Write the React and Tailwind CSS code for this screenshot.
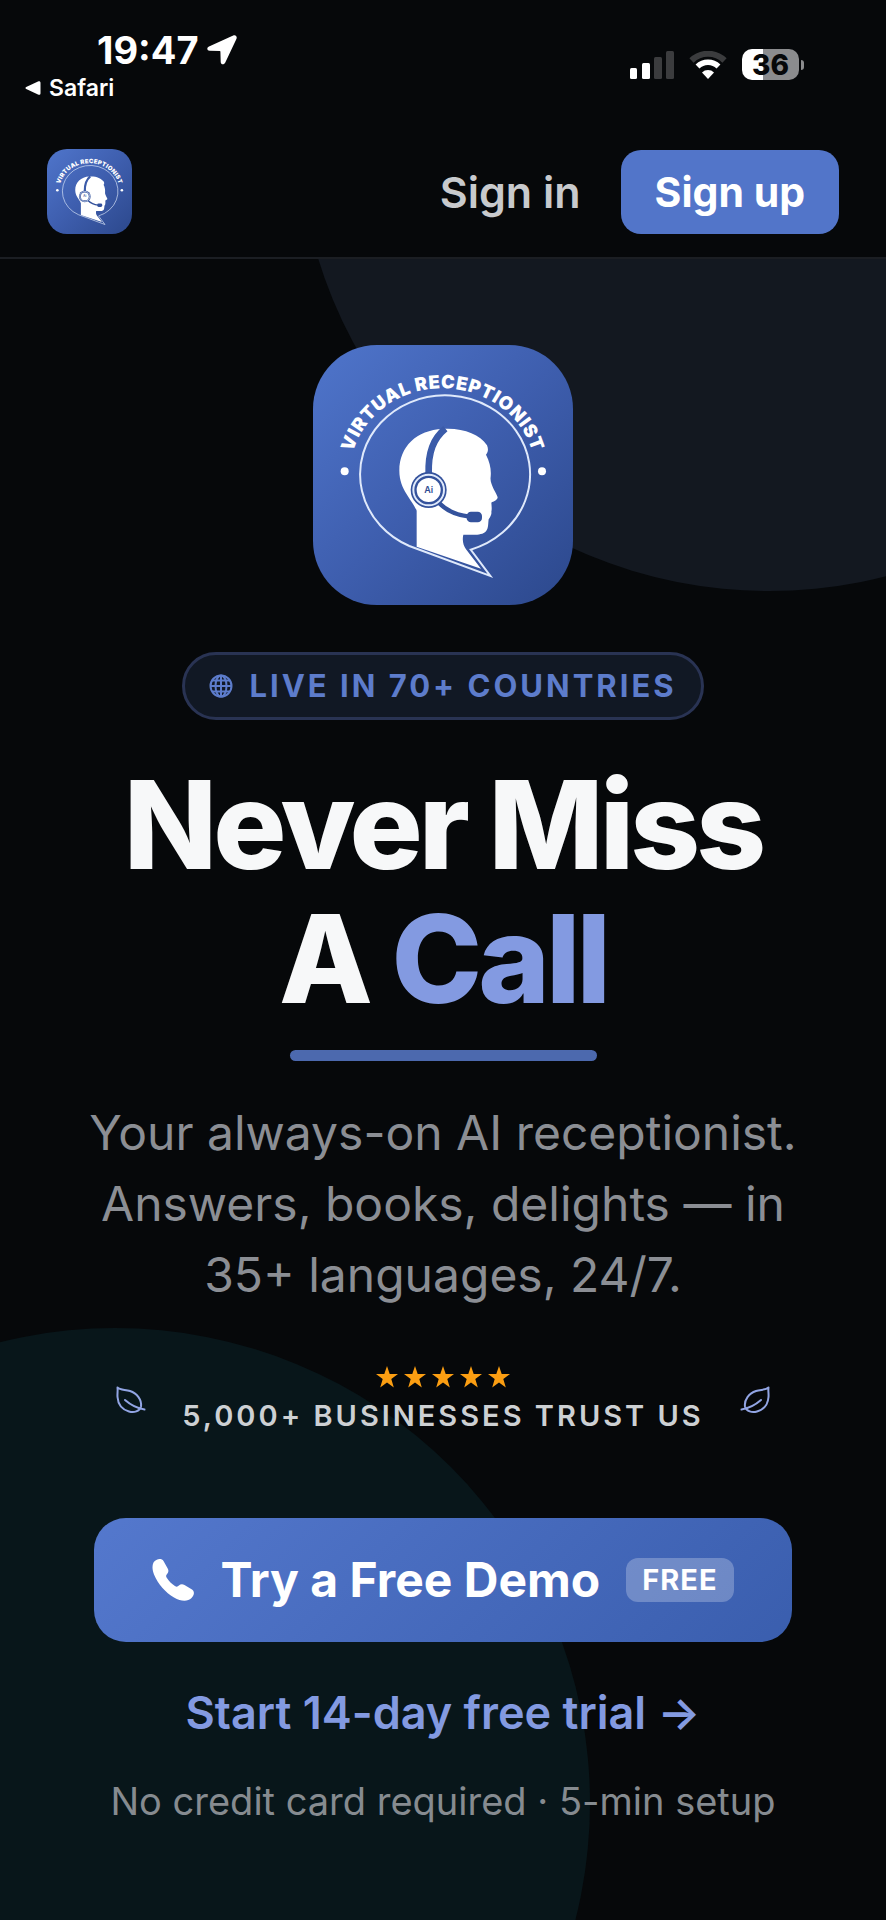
import { useId } from 'react'

const STARS = [1, 2, 3, 4, 5]

export default function App() {
  return (
    <div className="relative flex min-h-screen flex-col overflow-hidden bg-[#06080a] font-['Inter',sans-serif] text-white">
      <div className="relative z-10 bg-[#06080a]">
        <StatusBar />
        <Header />
      </div>
      <Hero />
    </div>
  )
}

function StatusBar() {
  return (
    <div className="flex h-[126px] items-start justify-between pt-8 pr-[82px] pl-[25px]">
      <div>
        <div className="flex items-center gap-2 pl-[72px]">
          <span className="text-[38px] leading-9 font-bold">19:47</span>
          <svg viewBox="0 0 30 30" className="size-[30px]" fill="currentColor" aria-hidden="true">
            <path d="M26.200.6 2 11.400c-2.600 1.200-2 4.200.6 4.300l10.200.3c.4 0 .6.2.6.6l.3 10.400c.1 2.800 3.400 3.200 4.600.6L29.400 4C30.500 1.600 28.600-.5 26.200.6Z" />
          </svg>
        </div>
        <a href="#safari" className="mt-1.5 flex items-center gap-2">
          <svg viewBox="0 0 16 14" className="h-3.5 w-4" fill="currentColor" aria-hidden="true">
            <path d="M1.200 6 13 .4C14.500-.2 15.500.4 15.500 1.800v10.400c0 1.400-1 2-2.500 1.400L1.200 8C.2 7.500.2 6.500 1.200 6Z" />
          </svg>
          <span className="text-[23px] leading-7 font-semibold">Safari</span>
        </a>
      </div>

      <div className="flex items-center gap-[15px] pt-[17px]">
        <svg viewBox="0 0 44 28" className="h-7 w-11" aria-hidden="true">
          <rect x="0" y="17" width="7" height="11" rx="1.500" fill="#fff" />
          <rect x="12" y="12" width="8" height="16" rx="1.500" fill="#fff" />
          <rect x="24" y="6" width="8" height="22" rx="1.500" fill="#3b3c3e" />
          <rect x="36" y="0" width="8" height="28" rx="1.500" fill="#3b3c3e" />
        </svg>
        <svg viewBox="0 0 38 28" className="h-7 w-[38px]" fill="none" aria-hidden="true">
          <path d="M2.500 9.500a23.500 23.500 0 0 1 33 0" stroke="#3b3c3e" strokeWidth="6" />
          <path d="M8.500 15.500a15 15 0 0 1 21 0" stroke="#fff" strokeWidth="5.500" />
          <path d="M19 28l-6-6.500a8.500 8.500 0 0 1 12 0Z" fill="#fff" />
        </svg>
        <div className="flex items-center gap-0.5">
          <div className="flex h-[31px] w-[57px] items-center justify-center rounded-[10px] bg-linear-to-r from-white from-36% to-[#8b8c8e] to-36%">
            <span className="text-[28px] leading-7 font-extrabold text-[#06080a]">36</span>
          </div>
          <div className="h-2.5 w-[3px] rounded-r-full bg-[#8b8c8e]" />
        </div>
      </div>
    </div>
  )
}

function Header() {
  return (
    <header className="flex items-center justify-between border-b-2 border-[#1b1e23] px-[47px] py-[23px]">
      <a href="#home" aria-label="Virtual Receptionist">
        <Logo className="size-[85px] rounded-[20px]" />
      </a>
      <nav className="flex items-center gap-10">
        <a href="#sign-in" className="text-[43px] leading-[52px] font-semibold text-[#c8cacd]">Sign in</a>
        <a href="#sign-up" className="rounded-[20px] bg-[#5275c9] px-[34px] py-4 text-[41px] leading-[52px] font-bold">
          Sign up
        </a>
      </nav>
    </header>
  )
}

function Hero() {
  return (
    <main className="relative flex flex-1 flex-col items-center px-10 pt-[86px] pb-20">
      {/* background discs */}
      <div className="absolute -top-[612px] -right-[355px] size-[944px] rounded-full bg-[#131820]" />
      <div className="absolute -bottom-[358px] -left-[360px] size-[950px] rounded-full bg-[#08161a]" />

      <div className="relative flex w-full flex-col items-center">
        <Logo className="size-[260px] rounded-[64px]" />

        <div className="mt-[47px] flex h-[68px] items-center gap-4 rounded-full border-[3px] border-[#293353] bg-[#111824] px-6 text-[#5d7ccb]">
          <Globe />
          <span className="text-[31px] leading-10 font-bold tracking-[3px]">LIVE IN 70+ COUNTRIES</span>
        </div>

        <h1 className="mt-[38px] text-center text-[122px] leading-[134px] font-extrabold tracking-[-4px] text-[#f7f8f9]">
          Never Miss<br />A <span className="text-[#839ae1]">Call</span>
        </h1>
        <div className="mt-6 h-[11px] w-[307px] rounded-full bg-[#4c69ae]" />

        <p className="mt-9 text-center text-[48px] leading-[71px] text-[#8b8e94]">
          Your always-on AI receptionist.<br />
          Answers, books, delights — in<br />
          35+ languages, 24/7.
        </p>

        <div className="mt-14 flex items-center gap-9">
          <Leaf />
          <div className="flex flex-col items-center gap-2.5">
            <div className="flex gap-1.5" role="img" aria-label="5 out of 5 stars">
              {STARS.map((n) => <Star key={n} />)}
            </div>
            <span className="text-[29px] leading-9 font-semibold tracking-[3px] text-[#cdd0d3]">
              5,000+ BUSINESSES TRUST US
            </span>
          </div>
          <Leaf className="-scale-x-100" />
        </div>

        <div className="mt-[84px] w-full px-[54px]">
          <button className="flex h-[124px] w-full items-center justify-center gap-[26px] rounded-[32px] bg-linear-135 from-[#5478cd] to-[#3a5eae]">
            <Phone />
            <span className="text-[48px] leading-[60px] font-bold">Try a Free Demo</span>
            <span className="rounded-xl bg-white/25 px-4 py-1 text-[29px] leading-9 font-bold tracking-[1px]">FREE</span>
          </button>
        </div>

        <a href="#trial" className="mt-[43px] text-[45px] leading-14 font-semibold text-[#839ae1]">
          Start 14-day free trial →
        </a>
        <p className="mt-9 text-[38px] leading-12 text-[#868b90]">No credit card required · 5-min setup</p>
      </div>
    </main>
  )
}

function Logo({ className }) {
  const id = useId()
  const bg = `${id}-bg`
  const arc = `${id}-arc`
  return (
    <svg viewBox="41 45 780 780" className={className} role="img" aria-label="Virtual Receptionist logo">
      <defs>
        <linearGradient id={bg} x1="0" y1="0" x2="1" y2="1">
          <stop offset="0" stopColor="#4f75cb" />
          <stop offset="0.500" stopColor="#3e5eae" />
          <stop offset="1" stopColor="#2c488c" />
        </linearGradient>
        <path id={arc} d="M152 430a278 255 0 0 1 556 0" />
      </defs>
      <rect x="41" y="45" width="780" height="780" fill={`url(#${bg})`} />
      <text className="font-['Inter',sans-serif] text-[55px] font-black tracking-[2px]" fill="#fff" textAnchor="middle">
        <textPath href={`#${arc}`} startOffset="50%">VIRTUAL RECEPTIONIST</textPath>
      </text>
      <circle cx="136" cy="424" r="12" fill="#fff" />
      <circle cx="728" cy="424" r="12" fill="#fff" />

      {/* speech bubble */}
      <path
        d="M330 648A255 237 0 1 1 514 659L573 738Z"
        fill="none" stroke="#dfe9fb" strokeWidth="6"
      />
      {/* head */}
      <path
        d="M352 650V542C340 510 300 480 300 422C300 350 352 300 430 297C490 293 540 312 563 346C568 358 566 366 560 374C572 396 576 420 574 440C570 462 592 490 595 502C594 512 582 514 576 518C577 530 578 536 576 546C578 552 572 562 568 568C566 582 568 594 560 604C548 618 520 614 492 614C488 632 492 646 500 658L545 716Z"
        fill="#fff"
      />
      {/* headset */}
      <path d="M438 296C402 326 386 366 388 432" fill="none" stroke="#3b5ba9" strokeWidth="20" />
      <path d="M420 520C446 546 474 556 510 560" fill="none" stroke="#34529c" strokeWidth="13" />
      <rect x="502" y="545" width="46" height="32" rx="13" fill="#34529c" />
      <circle cx="388" cy="480" r="54" fill="#34529c" />
      <circle cx="388" cy="480" r="46" fill="#34529c" stroke="#dfe9fb" strokeWidth="6" />
      <circle cx="388" cy="480" r="36" fill="#fff" />
      <text x="388" y="490" className="font-['Inter',sans-serif] text-[27px] font-semibold" fill="#2f4c93" textAnchor="middle">Ai</text>
    </svg>
  )
}

function Globe() {
  return (
    <svg viewBox="0 0 24 24" className="size-6" fill="none" stroke="currentColor" strokeWidth="2" aria-hidden="true">
      <circle cx="12" cy="12" r="10.500" />
      <ellipse cx="12" cy="12" rx="5.500" ry="10.500" />
      <path d="M12 1.500v21M1.500 12h21M3 6.500h18M3 17.500h18" />
    </svg>
  )
}

function Leaf({ className }) {
  return (
    <svg viewBox="0 0 30 28" className={`h-7 w-[30px] ${className ?? ''}`} fill="none" stroke="#92a5e4" strokeWidth="2" strokeLinecap="round" strokeLinejoin="round" aria-hidden="true">
      <path d="M1.500 1.500C4 4 9 3.500 14 5c7 2 12 9 11 15.500-1.500 5-7 6.500-12 5C6 23.500 2 18 1.500 11c-.3-4 .5-6 0-9.500Z" />
      <path d="M9 14c4 3.500 10 8 19.500 9.500" />
    </svg>
  )
}

function Star() {
  return (
    <svg viewBox="0 0 22 22" className="size-[22px]" fill="#fb9e12" aria-hidden="true">
      <path d="M11 0l2.700 8H22l-6.700 5 2.500 8.500L11 16.400 4.200 21.500 6.700 13 0 8h8.300Z" />
    </svg>
  )
}

function Phone() {
  return (
    <svg viewBox="0 0 42 42" className="size-[42px]" fill="currentColor" aria-hidden="true">
      <path d="M1.500 3.500C4-.2 9.500-1.200 11.500 2l4.200 7.500c1.200 2.200.8 4-.6 5.500-1.400 1.400-1.200 2.400-.2 4 2 3.200 4.800 6 8 8 1.600 1 2.600 1 4-.4 1.500-1.400 3.400-1.800 5.600-.6l7.500 4.500c2.800 1.800 2.400 5.600-.5 8.500-4 4-10.500 3.500-17.500-.5C13.500 33.500 6 25 2 15.500.2 11 0 6.500 1.500 3.500Z" />
    </svg>
  )
}
